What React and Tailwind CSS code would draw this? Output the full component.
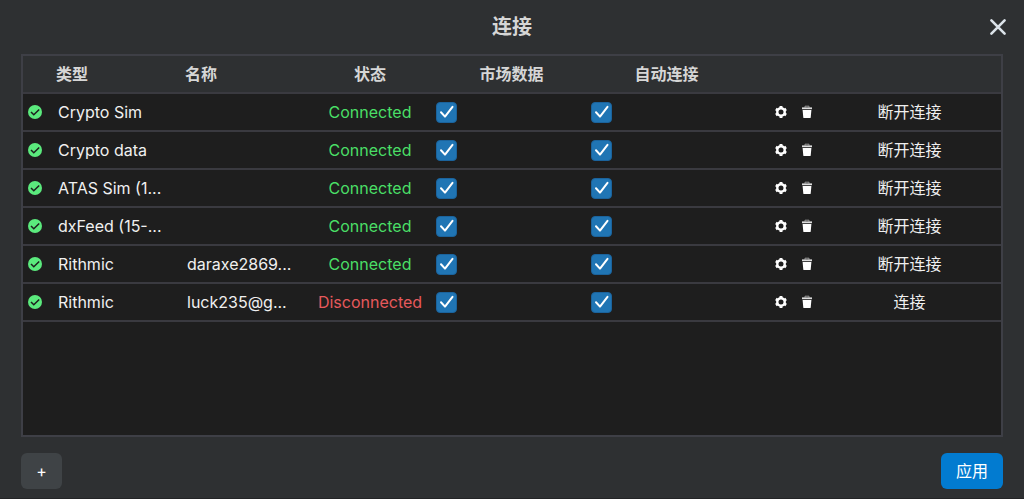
import React, { useState } from 'react';
import clsx from 'clsx';

const initialConnections = [
  { id: 1, type: 'Crypto Sim', name: '', connected: true },
  { id: 2, type: 'Crypto data', name: '', connected: true },
  { id: 3, type: 'ATAS Sim (1...', name: '', connected: true },
  { id: 4, type: 'dxFeed (15-...', name: '', connected: true },
  { id: 5, type: 'Rithmic', name: 'daraxe2869...', connected: true },
  { id: 6, type: 'Rithmic', name: 'luck235@g...', connected: false },
];

const StatusIcon = () => (
  <svg viewBox="0 0 14 14" className="block size-3.5" aria-hidden="true">
    <circle cx="7" cy="7" r="7" fill="#5bea7d" />
    <path d="M3 7 5.8 9.8 11.2 4.5" fill="none" stroke="#1e1e1e" strokeWidth="1.5" />
  </svg>
);

const GearIcon = () => (
  <svg viewBox="0 0 24 24" className="block size-3.5" aria-hidden="true">
    <circle cx="12" cy="12" r="6.4" fill="none" stroke="#fff" strokeWidth="4.2" />
    <path
      d="M12 1.8v3M12 19.2v3M3.2 6.9l2.6 1.5M18.2 15.6l2.6 1.5M3.2 17.1l2.6-1.5M18.2 8.4l2.6-1.5"
      fill="none"
      stroke="#fff"
      strokeWidth="5"
    />
  </svg>
);

const TrashIcon = () => (
  <svg viewBox="0 0 14 14" className="block size-3.5" aria-hidden="true">
    <path d="M5 2.6V1.2h4v1.4" fill="none" stroke="#999" strokeWidth="1" />
    <path d="M2 2.4h10v1.8H2z" fill="#ddd" />
    <path d="M2.6 5h8.8l-.7 7.4a.8.8 0 0 1-.8.7H4.1a.8.8 0 0 1-.8-.7z" fill="#fff" />
  </svg>
);

const CheckBox = ({ label }) => {
  const [checked, setChecked] = useState(true);

  return (
    <label className="grid size-[21px] cursor-pointer place-items-center">
      <input
        type="checkbox"
        aria-label={label}
        checked={checked}
        onChange={() => setChecked(!checked)}
        className="col-start-1 row-start-1 size-[21px] appearance-none rounded border border-[#1b639c] bg-[#1e1e1e] checked:bg-[#2075b4]"
      />
      {checked && (
        <svg viewBox="0 0 21 21" className="pointer-events-none col-start-1 row-start-1 size-[21px]">
          <path d="M5 10.3 9 14.6 16.5 4.8" fill="none" stroke="#fff" strokeWidth="2" strokeLinecap="round" strokeLinejoin="round" />
        </svg>
      )}
    </label>
  );
};

const ConnectionRow = ({ connection, onToggle }) => {
  const { type, name, connected } = connection;

  return (
    <tr className="h-[38px] *:border-b-2 *:border-[#3a3a40] *:p-0">
      <td>
        <div className="pl-[5px]">
          <StatusIcon />
        </div>
      </td>
      <td>
        <div className="truncate pl-2.5">{type}</div>
      </td>
      <td>
        <div className="truncate pl-2.5">{name}</div>
      </td>
      <td className={clsx('text-center', connected ? 'text-[#4ade66]' : 'text-[#e6595c]')}>
        {connected ? 'Connected' : 'Disconnected'}
      </td>
      <td>
        <div className="pl-0.5">
          <CheckBox label="市场数据" />
        </div>
      </td>
      <td>
        <div className="pl-0.5">
          <CheckBox label="自动连接" />
        </div>
      </td>
      <td>
        <div className="flex items-center justify-end gap-3 pr-1">
          <button type="button" aria-label="设置" className="cursor-pointer">
            <GearIcon />
          </button>
          <button type="button" aria-label="删除" className="cursor-pointer">
            <TrashIcon />
          </button>
        </div>
      </td>
      <td className="text-center">
        <button type="button" onClick={onToggle} className="cursor-pointer">
          {connected ? '断开连接' : '连接'}
        </button>
      </td>
    </tr>
  );
};

const App = () => {
  const [connections, setConnections] = useState(initialConnections);

  const toggle = (id) => {
    setConnections(connections.map((c) => (c.id === id ? { ...c, connected: !c.connected } : c)));
  };

  return (
    <div className="flex min-h-screen flex-col border-b border-[#232426] bg-[#2e3032] font-['Inter','Noto_Sans_CJK_SC',sans-serif] text-base leading-6 text-[#f0f0f0]">
      <header className="grid h-[54px] grid-cols-[1fr_auto_1fr] items-center px-[17px]">
        <h1 className="col-start-2 text-xl font-bold text-[#d6d6d6]">连接</h1>
        <button type="button" aria-label="关闭" className="cursor-pointer justify-self-end">
          <svg viewBox="0 0 18 18" className="block size-[18px]" aria-hidden="true">
            <path d="M2.4 2.4 15.6 15.6M15.6 2.4 2.4 15.6" stroke="#dce3ea" strokeWidth="2.6" strokeLinecap="round" />
          </svg>
        </button>
      </header>

      <main className="mx-[21px] flex-1 border-2 border-[#3e3f46] bg-[#1e1e1e]">
        <table className="w-full table-fixed border-separate border-spacing-0">
          <colgroup>
            <col className="w-[25px]" />
            <col className="w-[129px]" />
            <col className="w-[129px]" />
            <col className="w-[128px]" />
            <col className="w-[155px]" />
            <col className="w-[155px]" />
            <col className="w-[74px]" />
            <col />
          </colgroup>
          <thead>
            <tr className="h-[38px] bg-[#2e3032] text-[#d6d6d6] *:border-b-2 *:border-[#3a3a40] *:p-0">
              <th></th>
              <th className="text-left">
                <div className="pl-2">类型</div>
              </th>
              <th className="text-left">
                <div className="pl-2">名称</div>
              </th>
              <th>状态</th>
              <th>市场数据</th>
              <th>自动连接</th>
              <th></th>
              <th></th>
            </tr>
          </thead>
          <tbody>
            {connections.map((connection) => (
              <ConnectionRow key={connection.id} connection={connection} onToggle={() => toggle(connection.id)} />
            ))}
          </tbody>
        </table>
      </main>

      <footer className="flex items-center justify-between px-[21px] pt-4 pb-[9px]">
        <button type="button" className="h-9 w-[41px] cursor-pointer rounded-md bg-[#3f4346] text-base text-white">
          +
        </button>
        <button type="button" className="h-9 w-[62px] cursor-pointer rounded-md bg-[#027bd0] text-white">
          应用
        </button>
      </footer>
    </div>
  );
};

export default App;
